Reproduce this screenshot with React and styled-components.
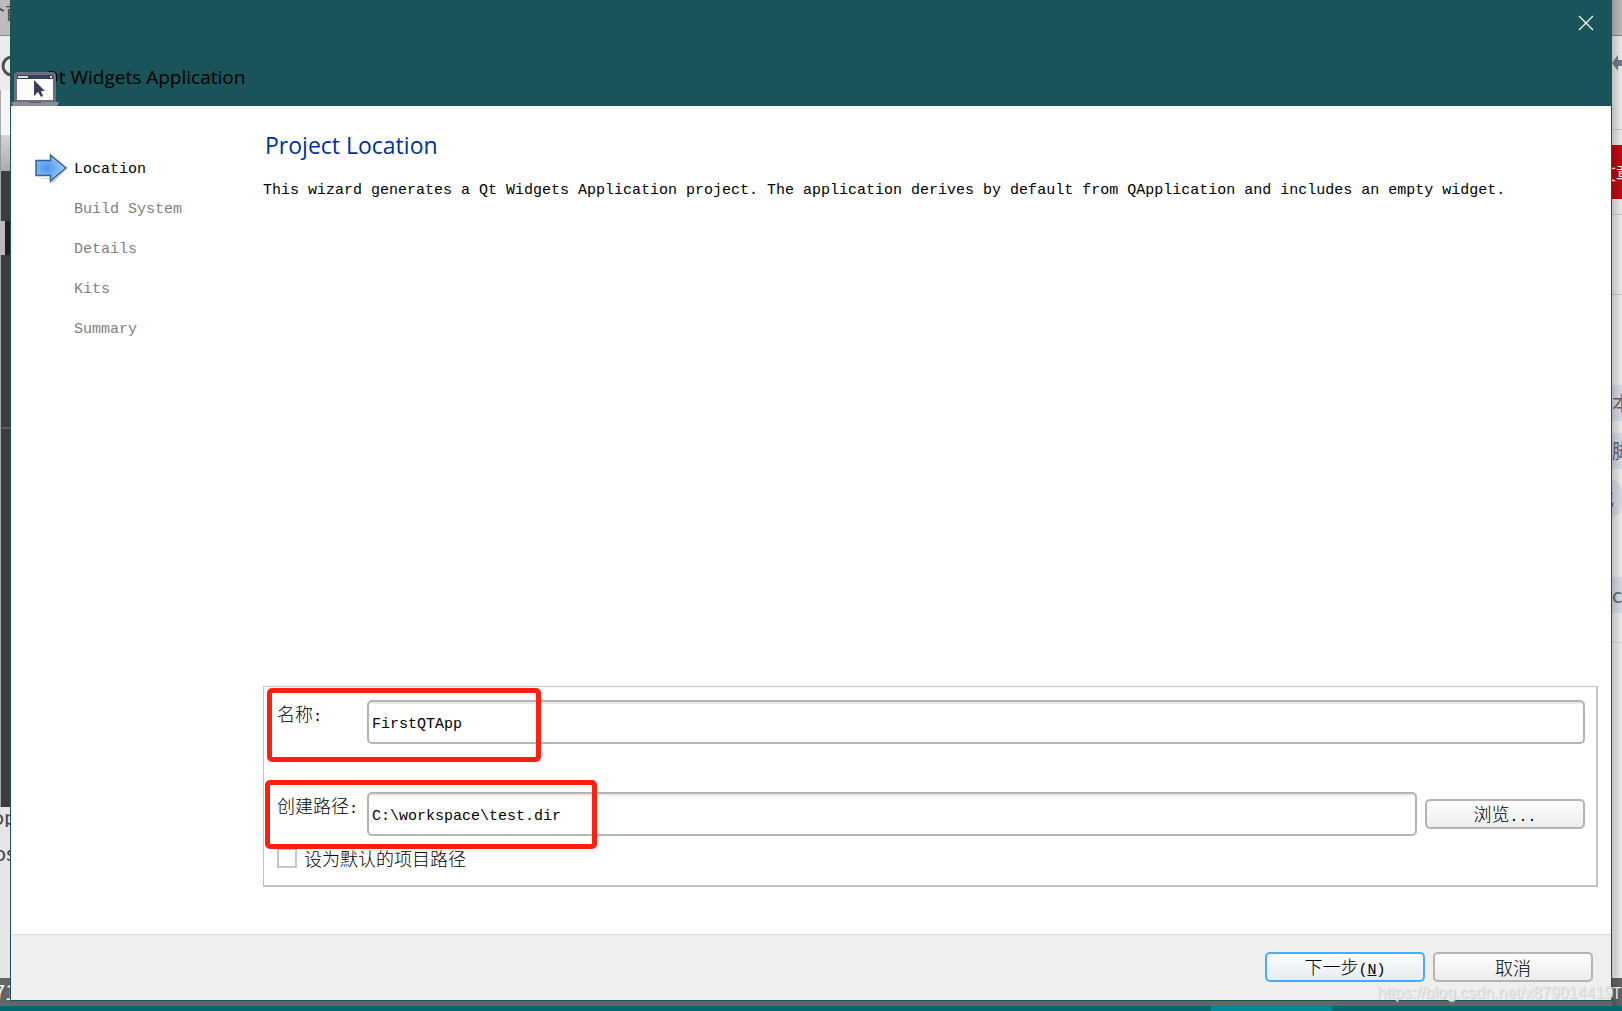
import React from "react";
import styled, { createGlobalStyle, css } from "styled-components";

const TEAL = "#1b535b";
const LATIN = '"Open Sans", "Noto Sans", sans-serif';
const MONO = '"Liberation Mono", "Noto Sans CJK SC", monospace';
const HAN = '"Noto Sans CJK SC", sans-serif';

const GlobalStyle = createGlobalStyle`
  *, *::before, *::after { box-sizing: border-box; }
  html, body, #root { height: 100%; }
  body { margin: 0; overflow: hidden; font-family: ${HAN}; color: #000; }
  h1, h2, p, ol { margin: 0; padding: 0; font-weight: 400; }
`;

const Desktop = styled.div`
  min-height: 100vh;
  display: grid;
  grid-template-columns: 10px minmax(0, 1fr) 10px;
  grid-template-rows: minmax(0, 1fr) 5px;
  background: #656565;
`;

const Strip = styled.div`
  display: flex;
  flex-direction: column;
  overflow: hidden;
  position: relative;
  background: #f2f2f2;
  ${(p) =>
    p.$shaded &&
    css`
      &::after {
        content: "";
        position: absolute;
        inset: 0;
        background: linear-gradient(90deg, rgba(0, 0, 0, 0.2), rgba(0, 0, 0, 0.03));
      }
    `}
`;

const Slice = styled.div`
  flex: ${(p) => (p.$h ? `0 0 ${p.$h}px` : "1 1 0")};
  display: flex;
  align-items: center;
  overflow: hidden;
  white-space: nowrap;
  background: ${(p) => p.$bg};
  color: ${(p) => p.$color || "#444"};
  font-size: ${(p) => p.$size || 20}px;
  line-height: 20px;
  border-left: ${(p) => (p.$edge ? `${p.$edgeWidth || 1}px solid ${p.$edge}` : "0")};
  border-radius: ${(p) => (p.$round ? "0 18px 18px 0" : "0")};
`;

const Peek = styled.span`
  margin-left: -${(p) => p.$hide}px;
`;

const Window = styled.main`
  display: flex;
  flex-direction: column;
  min-width: 0;
  margin-bottom: 5px;
  border: 1px solid ${TEAL};
  background: #fff;
`;

const TitleBar = styled.header`
  display: flex;
  flex-direction: column;
  height: 105px;
  background: ${TEAL};
`;

const CloseRow = styled.div`
  display: flex;
  justify-content: flex-end;
  padding: 13px 16px 0 0;
`;

const CloseButton = styled.button`
  width: 18px;
  height: 18px;
  padding: 1px;
  border: 0;
  background: none;
  svg { display: block; }
`;

const TitleRow = styled.div`
  display: flex;
  align-items: flex-end;
  margin-top: auto;
`;

const AppTitle = styled.h1`
  margin-left: -15px;
  padding-bottom: 15px;
  font: 400 19px/28px ${LATIN};
  white-space: nowrap;
`;

const IconBox = styled.div`
  position: relative;
  z-index: 1;
  width: 48px;
  height: 34px;
  svg { display: block; }
`;

const Content = styled.div`
  flex: 1;
  display: flex;
  min-height: 0;
`;

const Steps = styled.ol`
  width: 252px;
  flex: none;
  padding: 42px 0 0 24px;
  list-style: none;
`;

const Step = styled.li`
  display: flex;
  align-items: center;
  height: 40px;
  gap: 7px;
  font: 15px/20px ${MONO};
  color: ${(p) => (p.$current ? "#000" : "#808080")};
`;

const StepName = styled.span`
  padding-top: 4px;
`;

const Marker = styled.span`
  width: 32px;
  height: 32px;
  flex: none;
  svg { display: block; }
`;

const Page = styled.section`
  flex: 1;
  min-width: 0;
  display: flex;
  flex-direction: column;
  padding: 23px 13px 47px 0;
`;

const PageTitle = styled.h2`
  padding-left: 2px;
  font: 400 23px/32px ${LATIN};
  color: #003399;
`;

const Intro = styled.p`
  margin-top: 20px;
  font: 15px/20px ${MONO};
`;

const Group = styled.form`
  position: relative;
  display: grid;
  grid-template-columns: 82px minmax(0, 1fr) 160px;
  grid-template-rows: 44px 48px 44px 1fr;
  column-gap: 8px;
  height: 201px;
  margin-top: auto;
  padding: 13px 11px 0 13px;
  border: solid #c3c3c3;
  border-width: 1px 2px 2px 1px;
`;

const Label = styled.label`
  font: 300 18px/26px ${HAN};
  white-space: nowrap;
`;

const Field = styled.input`
  min-width: 0;
  width: 100%;
  height: 44px;
  padding: 4px 3px 0;
  border: 2px solid #b4b4b4;
  border-radius: 5px;
  outline: 0;
  background: #fff;
  box-shadow: inset 0 2px 0 #ebebeb;
  font: 15px/20px ${MONO};
  color: #000;
  grid-column: ${(p) => (p.$wide ? "2 / 4" : "2")};
`;

const Spacer = styled.div`
  grid-column: 1 / 4;
`;

const PushButton = styled.button`
  width: 160px;
  height: 30px;
  padding: 0;
  align-self: center;
  border: 2px solid ${(p) => (p.$primary ? "#45adff" : "#b4b4b4")};
  border-radius: 5px;
  background: linear-gradient(#fefefe, ${(p) => (p.$primary ? "#e4ebf2" : "#ececec")});
  color: #000;
  font: 300 18px/24px ${HAN};
`;

const Mono = styled.span`
  font: 15px/20px ${MONO};
`;

const CheckRow = styled.div`
  grid-column: 1 / 4;
  display: flex;
  align-items: center;
  gap: 7px;
  height: 28px;
  margin-top: 8px;
`;

const Check = styled.input`
  appearance: none;
  width: 20px;
  height: 20px;
  margin: 0;
  border: 2px solid #c6c6c6;
  background: #fff;
`;

const Highlight = styled.div`
  position: absolute;
  left: ${(p) => p.$left}px;
  top: ${(p) => p.$top}px;
  width: ${(p) => p.$width}px;
  height: ${(p) => p.$height}px;
  border: 5px solid #ff1f10;
  border-radius: 5px;
  pointer-events: none;
`;

const Footer = styled.footer`
  display: flex;
  justify-content: flex-end;
  gap: 8px;
  height: 66px;
  padding: 0 18px 2px 0;
  border-top: 1px solid #dcdcdc;
  background: #efefef;
`;

const Taskbar = styled.div`
  grid-column: 1 / 4;
  display: flex;
  justify-content: flex-end;
  padding-right: 290px;
  background: #036774;
`;

const ActiveTask = styled.div`
  width: 121px;
  background: #008a9b;
`;

const Watermark = styled.div`
  position: absolute;
  right: 9px;
  bottom: 8px;
  font: 16px/20px "Liberation Sans", Arial, sans-serif;
  color: #e9e9e9;
  text-shadow: 1px 1px 1px #c9c9c9;
`;

function AppIcon() {
  return (
    <svg width="48" height="34" viewBox="0 0 48 34" aria-hidden="true">
      <path d="M3 31V4Q3 0 7 0H41Q45 0 45 4V31Z" fill="#6c6f7f" />
      <rect x="6" y="3" width="36" height="25" fill="#fcfcfc" />
      <rect x="6" y="3" width="36" height="4" fill="#3a3f58" />
      <rect x="7" y="4" width="10" height="2" fill="#dfe1ea" />
      <rect x="39" y="4" width="2" height="2" fill="#dfe1ea" />
      <path d="M23 8V24L27 20L30 25L32 24L30 19H34Z" fill="#3a3f58" />
      <path d="M0 30H48L46 34H2Z" fill="#8b8c99" />
      <path d="M18 30H30V31H18Z" fill="#5d6070" />
    </svg>
  );
}

function ArrowIcon() {
  return (
    <svg width="32" height="32" viewBox="0 0 32 32" aria-hidden="true">
      <defs>
        <radialGradient id="arrowFill" cx="0.35" cy="0.5" r="0.65">
          <stop offset="0" stopColor="#4a94ee" />
          <stop offset="1" stopColor="#a5d0fa" />
        </radialGradient>
      </defs>
      <path d="M2 26H15V31H18L32 17L18 28Z" fill="#000" opacity="0.18" />
      <path d="M1 8.500H15.500V3L31 16L15.500 29V23.500H1Z" fill="url(#arrowFill)" stroke="#2f6296" strokeWidth="1.500" />
    </svg>
  );
}

const steps = ["Location", "Build System", "Details", "Kits", "Summary"];

function LeftBackdrop() {
  return (
    <Strip aria-hidden="true">
      <Slice $h={22} $bg="#bcbcbc" $size={18}><Peek $hide={13}>个首</Peek></Slice>
      <Slice $h={13} $bg="#bcbcbc" />
      <Slice $h={1} $bg="#888" />
      <Slice $h={54} $bg="#ebebeb">
        <svg width="10" height="30" viewBox="0 0 10 30"><path d="M12 9A9 9 0 0 0 12 27" fill="none" stroke="#505050" strokeWidth="3" /></svg>
      </Slice>
      <Slice $h={45} $bg="#f6f6f6" $edge="#aaa" />
      <Slice $h={36} $bg="linear-gradient(#d6d6d6, #aaa)" $edge="#999" />
      <Slice $h={50} $bg="#3a3c3d" $edge="#a4a7a9" />
      <Slice $h={34} $bg="#1e1f20" $edge="#b9b9b9" $edgeWidth={5} />
      <Slice $h={172} $bg="#3a3c3d" $edge="#a4a7a9" />
      <Slice $h={2} $bg="#5c5e5f" $edge="#a4a7a9" />
      <Slice $h={378} $bg="#3a3c3d" $edge="#a4a7a9" />
      <Slice $h={20} $bg="#e6e6e6"><Peek $hide={8}>op</Peek></Slice>
      <Slice $h={52} $bg="#e6e6e6"><Peek $hide={6}>os</Peek></Slice>
      <Slice $bg="#e6e6e6" />
      <Slice $h={28} $bg="#656565" $color="#fff"><Peek $hide={6}>71</Peek></Slice>
    </Strip>
  );
}

function RightBackdrop() {
  return (
    <Strip $shaded aria-hidden="true">
      <Slice $h={35} $bg="#c0c0c0" />
      <Slice $h={1} $bg="#8c8c8c" />
      <Slice $h={54} $bg="#efefef">
        <svg width="10" height="18" viewBox="0 0 10 18"><path d="M0 9L6 1V6H10V12H6V17Z" fill="#757f90" /></svg>
      </Slice>
      <Slice $h={39} $bg="#efefef" />
      <Slice $h={1} $bg="#cfcfcf" />
      <Slice $h={15} $bg="#efefef" />
      <Slice $h={54} $bg="#c20a15" $color="#fff" $size={18}><Peek $hide={14}>文章</Peek></Slice>
      <Slice $h={15} $bg="#efefef" />
      <Slice $h={1} $bg="#cfcfcf" />
      <Slice $h={79} $bg="#f2f2f2" />
      <Slice $h={1} $bg="#cfcfcf" />
      <Slice $h={90} $bg="#f2f2f2" />
      <Slice $h={36} $bg="#dde1ea" $color="#667">本</Slice>
      <Slice $h={12} $bg="#f2f2f2" />
      <Slice $h={36} $bg="#dde1ea" $color="#667">脚</Slice>
      <Slice $h={11} $bg="#f2f2f2" />
      <Slice $h={37} $bg="#dde1ea" $color="#667" $round><Peek $hide={18}>化</Peek></Slice>
      <Slice $h={60} $bg="#f2f2f2" />
      <Slice $h={36} $bg="#dde1ea" $color="#667">c</Slice>
      <Slice $h={29} $bg="#f2f2f2" />
      <Slice $h={1} $bg="#dcdcdc" />
      <Slice $bg="#f2f2f2" />
      <Slice $h={28} $bg="#656565" $color="#fff" $size={16}>TM</Slice>
    </Strip>
  );
}

export default function App() {
  return (
    <>
      <GlobalStyle />
      <Desktop>
        <LeftBackdrop />
        <Window>
          <TitleBar>
            <CloseRow>
              <CloseButton type="button" aria-label="Close">
                <svg width="16" height="16" viewBox="0 0 16 16"><path d="M1 1L15 15M15 1L1 15" stroke="#fff" strokeWidth="1.200" /></svg>
              </CloseButton>
            </CloseRow>
            <TitleRow>
              <IconBox><AppIcon /></IconBox>
              <AppTitle>Qt Widgets Application</AppTitle>
            </TitleRow>
          </TitleBar>
          <Content>
            <Steps>
              {steps.map((name, i) => (
                <Step key={name} $current={i === 0} aria-current={i === 0 ? "step" : undefined}>
                  <Marker>{i === 0 && <ArrowIcon />}</Marker>
                  <StepName>{name}</StepName>
                </Step>
              ))}
            </Steps>
            <Page>
              <PageTitle>Project Location</PageTitle>
              <Intro>
                This wizard generates a Qt Widgets Application project. The application derives by default from QApplication and includes an empty widget.
              </Intro>
              <Group onSubmit={(e) => e.preventDefault()}>
                <Label htmlFor="name">名称<Mono>:</Mono></Label>
                <Field id="name" $wide defaultValue="FirstQTApp" />
                <Spacer />
                <Label htmlFor="path">创建路径<Mono>:</Mono></Label>
                <Field id="path" defaultValue="C:\workspace\test.dir" />
                <PushButton type="button">浏览<Mono>...</Mono></PushButton>
                <CheckRow>
                  <Check type="checkbox" id="default" />
                  <Label htmlFor="default">设为默认的项目路径</Label>
                </CheckRow>
                <Highlight $left={3} $top={1} $width={274} $height={74} />
                <Highlight $left={1} $top={93} $width={332} $height={69} />
              </Group>
            </Page>
          </Content>
          <Footer>
            <PushButton type="button" $primary>下一步<Mono>(<u>N</u>)</Mono></PushButton>
            <PushButton type="button">取消</PushButton>
          </Footer>
        </Window>
        <RightBackdrop />
        <Taskbar><ActiveTask /></Taskbar>
        <Watermark>https://blog.csdn.net/x879014419</Watermark>
      </Desktop>
    </>
  );
}
